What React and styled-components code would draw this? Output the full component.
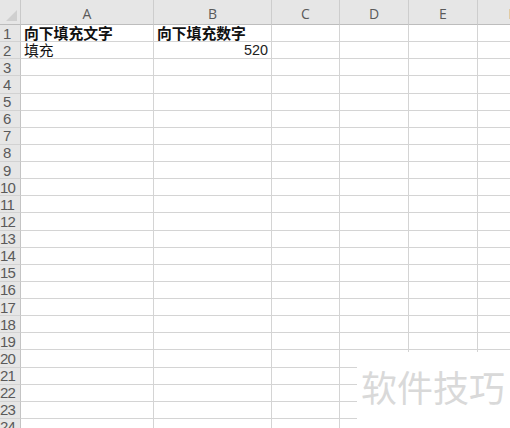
import styled, { createGlobalStyle } from "styled-components";

const GlobalStyle = createGlobalStyle`
  html, body {
    margin: 0;
    padding: 0;
    background: #ffffff;
    overflow: hidden;
  }
`;

const columns = ["A", "B", "C", "D", "E", "F"];
const rowCount = 24;

const cells = {
  "A1": { text: "向下填充文字", bold: true },
  "B1": { text: "向下填充数字", bold: true },
  "A2": { text: "填充" },
  "B2": { text: "520", align: "right" },
};

const Page = styled.div`
  position: relative;
  width: 510px;
  height: 428px;
  overflow: hidden;
  background: #ffffff;
`;

const Sheet = styled.div`
  display: grid;
  grid-template-columns: 21px 133px 118px 68px 69px 69px 69px;
  grid-template-rows: 25px repeat(${rowCount}, 17.14px);
  font-family: "Liberation Sans", "Noto Sans CJK SC", sans-serif;
`;

const Corner = styled.div`
  position: relative;
  background: #e6e6e6;
  border-right: 1px solid #c9c9c9;
  border-bottom: 1px solid #bdbdbd;
  box-sizing: border-box;
  &::after {
    content: "";
    position: absolute;
    right: 3px;
    bottom: 3px;
    width: 0;
    height: 0;
    border-left: 11px solid transparent;
    border-bottom: 11px solid #cfcfcf;
  }
`;

const ColHead = styled.div`
  display: flex;
  align-items: center;
  justify-content: center;
  background: #e6e6e6;
  border-right: 1px solid #cdcdcd;
  border-bottom: 1px solid #bdbdbd;
  box-sizing: border-box;
  color: #5a5a5a;
  font-family: "Open Sans", "Liberation Sans", sans-serif;
  font-size: 14px;
  padding-top: 2px;
`;

const RowHead = styled.div`
  display: flex;
  align-items: center;
  background: #e6e6e6;
  border-right: 1px solid #c4c4c4;
  border-bottom: 1px solid #d2d2d2;
  box-sizing: border-box;
  color: #5a5a5a;
  font-size: 15px;
  line-height: 17px;
  padding-left: ${(p) => (p.$wide ? "0" : "3px")};
  letter-spacing: -0.8px;
  white-space: nowrap;
  overflow: hidden;
`;

const Cell = styled.div`
  display: flex;
  align-items: flex-end;
  justify-content: ${(p) => (p.$align === "right" ? "flex-end" : "flex-start")};
  border-right: 1px solid #d4d4d4;
  border-bottom: 1px solid #d4d4d4;
  box-sizing: border-box;
  padding: 0 3px 0 3px;
  font-family: "Noto Sans CJK SC", "Liberation Sans", sans-serif;
  font-size: 14.8px;
  line-height: 16px;
  font-weight: ${(p) => (p.$bold ? 700 : 400)};
  color: #111111;
  white-space: nowrap;
`;

const Number = styled.span`
  font-family: "Liberation Sans", sans-serif;
  font-size: 14.4px;
  color: #222222;
`;

const Watermark = styled.div`
  position: absolute;
  left: 357px;
  top: 352px;
  right: 0;
  bottom: 0;
  background: #ffffff;
  display: flex;
  align-items: flex-start;
  padding: 12px 0 0 4px;
  box-sizing: border-box;
  font-family: "Noto Sans CJK SC", sans-serif;
  font-size: 36px;
  line-height: 44px;
  color: #d9d9d9;
  white-space: nowrap;
`;

export default function App() {
  const rows = Array.from({ length: rowCount }, (_, i) => i + 1);
  return (
    <Page>
      <GlobalStyle />
      <Sheet>
        <Corner />
        {columns.map((c) => (
          <ColHead key={c}>{c}</ColHead>
        ))}
        {rows.map((r) => [
          <RowHead key={`h${r}`} $wide={r >= 10}>
            {r}
          </RowHead>,
          ...columns.map((c) => {
            const cell = cells[`${c}${r}`];
            return (
              <Cell key={`${c}${r}`} $bold={cell?.bold} $align={cell?.align}>
                {cell &&
                  (cell.align === "right" ? (
                    <Number>{cell.text}</Number>
                  ) : (
                    cell.text
                  ))}
              </Cell>
            );
          }),
        ])}
      </Sheet>
      <Watermark>软件技巧</Watermark>
    </Page>
  );
}
